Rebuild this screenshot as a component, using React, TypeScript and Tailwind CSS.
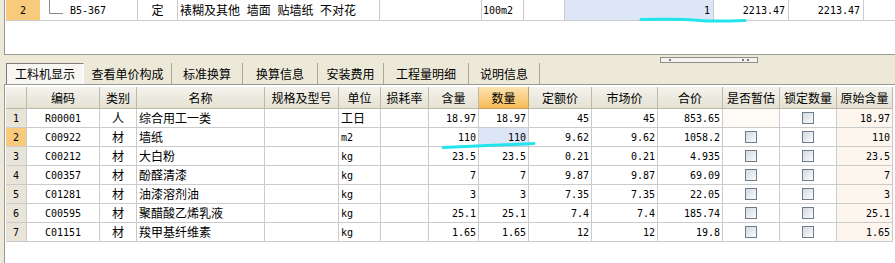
import React from "react";

const mono = "font-['DejaVu_Sans_Mono','Noto_Sans_CJK_SC',monospace] text-[10px]";
const cjk = "font-['Noto_Sans_CJK_SC',sans-serif] text-[12px]";

const tabs = [
  { name: "工料机显示", w: "w-[78px]", active: true },
  { name: "查看单价构成", w: "w-[88px]" },
  { name: "标准换算", w: "w-[71px]" },
  { name: "换算信息", w: "w-[75px]" },
  { name: "安装费用", w: "w-[66px]" },
  { name: "工程量明细", w: "w-[85px]" },
  { name: "说明信息", w: "w-[71px]" },
];

const headers = [
  "", "编码", "类别", "名称", "规格及型号", "单位", "损耗率", "含量", "数量",
  "定额价", "市场价", "合价", "是否暂估", "锁定数量", "原始含量",
];

type Row = {
  code: string;
  kind: string;
  name: string;
  unit: string;
  qty: string;
  price: string;
  total: string;
  est: boolean;
};

const rows: Row[] = [
  { code: "R00001", kind: "人", name: "综合用工一类", unit: "工日", qty: "18.97", price: "45", total: "853.65", est: false },
  { code: "C00922", kind: "材", name: "墙纸", unit: "m2", qty: "110", price: "9.62", total: "1058.2", est: true },
  { code: "C00212", kind: "材", name: "大白粉", unit: "kg", qty: "23.5", price: "0.21", total: "4.935", est: true },
  { code: "C00357", kind: "材", name: "酚醛清漆", unit: "kg", qty: "7", price: "9.87", total: "69.09", est: true },
  { code: "C01281", kind: "材", name: "油漆溶剂油", unit: "kg", qty: "3", price: "7.35", total: "22.05", est: true },
  { code: "C00595", kind: "材", name: "聚醋酸乙烯乳液", unit: "kg", qty: "25.1", price: "7.4", total: "185.74", est: true },
  { code: "C01151", kind: "材", name: "羧甲基纤维素", unit: "kg", qty: "1.65", price: "12", total: "19.8", est: true },
];

function Checkbox() {
  return (
    <span className="block w-[12px] h-[12px] border border-[#6d7c8b] bg-gradient-to-br from-[#d3dae1] to-[#fbfbfb]" />
  );
}

const cell = "h-[19px] border-r border-b border-[#cbcbcb] flex items-center";
const num = `${cell} justify-end pr-[2px] ${mono}`;

export default function App() {
  return (
    <div className={`relative w-[895px] h-[263px] overflow-hidden bg-[#ece9d8] text-black ${cjk}`}>
      {/* upper list */}
      <div className="ml-[4px] h-[55px] bg-white border-l border-b border-[#999999] pl-px">
        <div className="flex h-[21px] border-b border-[#cbcbcb]">
          <div className={`w-[34px] flex items-center justify-center bg-[#f8ca7c] ${mono}`}>2</div>
          <div className={`relative w-[98px] border-r border-[#cbcbcb] flex items-center pl-[30px] ${mono}`}>
            <svg className="absolute left-[8px] top-0" width="16" height="15">
              <path d="M1.5 0 V13.5 H15" stroke="#8a8a8a" fill="none" />
            </svg>
            B5-367
          </div>
          <div className="w-[40px] border-r border-[#cbcbcb] flex items-center justify-center">定</div>
          <div className="w-[202px] border-r border-[#cbcbcb] flex items-center pl-[2px] whitespace-nowrap [word-spacing:4px]">
            裱糊及其他 墙面 贴墙纸 不对花
          </div>
          <div className="w-[102px] border-r border-[#cbcbcb]" />
          <div className={`w-[42px] border-r border-[#cbcbcb] flex items-center pl-[1px] ${mono}`}>100m2</div>
          <div className="w-[41px] border-r border-[#cbcbcb]" />
          <div className={`w-[149px] border-r border-[#cbcbcb] bg-[#dde6f6] flex items-center justify-end pr-[3px] ${mono}`}>1</div>
          <div className={`w-[75px] border-r border-[#cbcbcb] flex items-center justify-end pr-[3px] ${mono}`}>2213.47</div>
          <div className={`w-[75px] border-r border-[#cbcbcb] flex items-center justify-end pr-[3px] ${mono}`}>2213.47</div>
          <div className="flex-1" />
        </div>
      </div>

      {/* splitter grip */}
      <div className="h-[8px] flex items-start pt-[2px] pl-[660px]">
        <div className="w-[98px] h-[6px] border border-[#8d8d8d] bg-[#f4f3ee] flex items-center justify-between px-[8px]">
          <span className="w-[2px] h-[2px] bg-[#7a7a7a]" />
          <span className="flex gap-[3px]">
            <span className="w-[2px] h-[2px] bg-[#7a7a7a]" />
            <span className="w-[2px] h-[2px] bg-[#7a7a7a]" />
          </span>
        </div>
      </div>

      {/* tabs */}
      <div className="flex h-[21px] pl-[6px] items-stretch">
        {tabs.map((t) => (
          <div
            key={t.name}
            className={
              t.active
                ? `${t.w} flex items-center justify-center bg-[#f7f6f2] border-t border-l border-[#7d7d7d] border-r border-r-[#ffffff]`
                : `${t.w} flex items-center justify-center border-r border-[#a9a799]`
            }
          >
            {t.name}
          </div>
        ))}
      </div>

      {/* lower table */}
      <div className="ml-[4px] h-[179px] bg-white border-l border-t border-[#999999] pt-[2px] pl-px">
        <div className="grid grid-cols-[21px_73px_37px_128px_74px_42px_48px_50px_50px_63px_66px_65px_57px_57px_56px]">
          {headers.map((h) => (
            <div
              key={h || "idx"}
              className={
                h === "数量"
                  ? "h-[22px] flex items-center justify-center border-r border-b border-[#c2a060] bg-gradient-to-b from-[#fde3ae] to-[#f6bb55]"
                  : "h-[22px] flex items-center justify-center border-r border-b border-[#bcb9aa] bg-gradient-to-b from-[#f4f3ec] to-[#e4e1d3]"
              }
            >
              {h}
            </div>
          ))}
          {rows.map((r, i) => (
            <React.Fragment key={r.code}>
              <div
                className={
                  i === 1
                    ? `${cell} justify-center bg-[#f8ca7c] border-[#c9b48a] ${mono}`
                    : `${cell} justify-center bg-[#e8e5d8] border-[#c9c6b7] ${mono}`
                }
              >
                {i + 1}
              </div>
              <div className={`${cell} justify-center ${mono}`}>{r.code}</div>
              <div className={`${cell} justify-center`}>{r.kind}</div>
              <div className={`${cell} pl-[2px] whitespace-nowrap`}>{r.name}</div>
              <div className={cell} />
              <div className={`${cell} pl-[2px] ${r.unit === "工日" ? "" : mono}`}>{r.unit}</div>
              <div className={cell} />
              <div className={num}>{r.qty}</div>
              <div className={i === 1 ? `${num} bg-[#dde6f6]` : num}>{r.qty}</div>
              <div className={num}>{r.price}</div>
              <div className={num}>{r.price}</div>
              <div className={num}>{r.total}</div>
              <div className={`${cell} justify-center ${r.est ? "" : "bg-[#fefbf7]"}`}>
                {r.est && <Checkbox />}
              </div>
              <div className={`${cell} justify-center`}>
                <Checkbox />
              </div>
              <div className={`${num} bg-[#fdf6ef]`}>{r.qty}</div>
            </React.Fragment>
          ))}
        </div>
      </div>

      {/* hand-drawn highlight marks */}
      <svg className="absolute left-0 top-0 pointer-events-none" width="895" height="263">
        <path d="M641 19.5 C 670 19, 690 19.5, 700 20.5 S 730 21, 745 20.5" stroke="#22e4ec" strokeWidth="3" fill="none" strokeLinecap="round" />
        <path d="M443 147.5 C 470 146.5, 500 145, 534 143.5" stroke="#22e4ec" strokeWidth="3" fill="none" strokeLinecap="round" />
      </svg>
    </div>
  );
}
